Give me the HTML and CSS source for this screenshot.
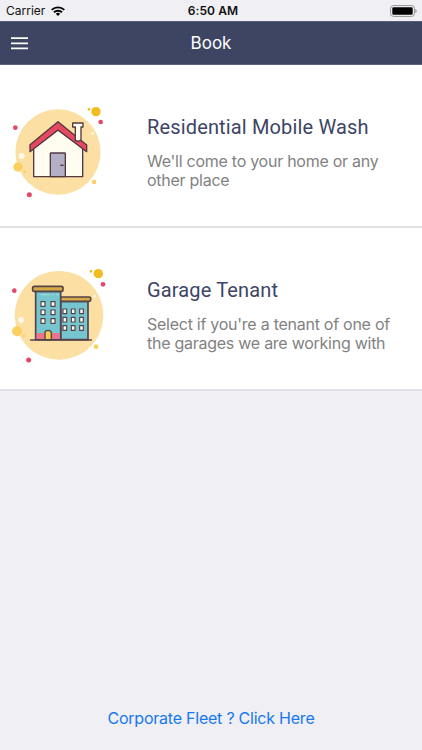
FILE: index.html
```html
<!DOCTYPE html>
<html lang="en">
<head>
<meta charset="utf-8">
<title>Book</title>
<link rel="stylesheet" href="styles.css">
</head>
<body>
<div class="status">
  <div class="carrier"><span class="carrier-name">Carrier</span>
    <svg class="wifi" viewBox="0 0 14 10" width="14" height="10"><g fill="none" stroke="#000" stroke-width="1.9"><path d="M.7 3.9a9.2 9.2 0 0 1 12.6 0"/><path d="M3 6.3a5.8 5.8 0 0 1 8 0"/></g><path d="M4.8 7.8a3.2 3.2 0 0 1 4.4 0L7 10z"/></svg>
  </div>
  <span class="time">6:50 AM</span>
  <svg class="battery" viewBox="0 0 27 12" width="27" height="12"><rect x=".6" y=".6" width="23.8" height="10.8" rx="2.8" fill="#f4f4f6" stroke="#929295"/><rect x="2.3" y="2.3" width="20.4" height="7.4" rx="1.3"/><path d="M25.3 4v4q1.4-.6 1.4-2t-1.4-2z" fill="#929295"/></svg>
</div>
<header class="nav">
  <svg class="menu" viewBox="0 0 17 13" width="17" height="13"><path d="M0 1.2h17M0 6.4h17M0 11.4h17" stroke="#fff" stroke-width="1.7"/></svg>
  <h1>Book</h1>
</header>
<main>
  <section class="row">
    <svg class="art art-house" viewBox="0 0 345 345">
      <circle cx="174" cy="171" r="128" fill="#fbdfa3"/>
      <g fill="#f1bc20"><circle cx="288" cy="50" r="14"/><circle cx="267" cy="43" r="4"/></g>
      <g fill="#fbcf60"><circle cx="54" cy="216" r="14"/><circle cx="74" cy="230" r="4"/><circle cx="282" cy="261" r="7"/></g>
      <g fill="#e54867"><circle cx="302" cy="81" r="7"/><circle cx="46" cy="98" r="7"/><circle cx="88" cy="299" r="7.5"/></g>
      <g fill="#fff8e8"><circle cx="65" cy="183" r="9"/><circle cx="278" cy="116" r="4"/></g>
      <g stroke="#543840" stroke-width="4" stroke-linejoin="round">
        <path d="M101 159L174 105l74 54v86H101z" fill="#fffdf0"/>
        <path d="M151 245v-69q0-2 2-2h41q2 0 2 2v69z" fill="#b3b0c6"/>
        <path d="M90 149l84-69 86 70v20l-86-65-84 65z" fill="#e54961"/>
        <path d="M226 136V96h-8V84h31v12h-6v39q-8 7-17 1z" fill="#fffdf0"/>
        <path d="M181 211h10" fill="none"/>
      </g>
    </svg>
    <div class="copy">
      <h2>Residential Mobile Wash</h2>
      <p>We'll come to your home or any<br>other place</p>
    </div>
  </section>
  <section class="row">
    <svg class="art art-garage" viewBox="0 0 345 345">
      <circle cx="177" cy="166" r="133" fill="#fbdfa3"/>
      <g fill="#f1bc20"><circle cx="295" cy="41" r="14"/><circle cx="273" cy="34" r="4"/></g>
      <g fill="#fbcf60"><circle cx="51" cy="214" r="15"/><circle cx="72" cy="228" r="4"/><circle cx="288" cy="260" r="7"/></g>
      <g fill="#e54867"><circle cx="309" cy="73" r="7"/><circle cx="43" cy="92" r="7"/><circle cx="86" cy="300" r="7.5"/></g>
      <g fill="#fff8e8"><circle cx="63" cy="180" r="9"/><circle cx="284" cy="109" r="4"/></g>
      <g stroke="#55424a" stroke-width="5" stroke-linejoin="round" stroke-linecap="round">
        <path d="M182 124h82v115h-82z" fill="#76c6d0"/>
        <rect x="177" y="111" width="95" height="13" rx="4" fill="#d5aa45"/>
        <path d="M107 94h75v145h-75z" fill="#76c6d0"/>
        <path d="M110 219h69v18h-69z" fill="#ee718d" stroke="none"/>
        <rect x="98" y="79" width="91" height="15" rx="5" fill="#d5aa45"/>
        <path d="M135 239v-20q0-8 9-8t10 8v20z" fill="#f3cd4e" stroke-width="4"/>
        <path d="M92 240h182"/>
      </g>
      <path d="M122 104h28M155 104h5M167 104h10" stroke="#a5dde0" stroke-width="3"/>
      <g fill="#fffdf0" stroke="#55424a" stroke-width="3.5">
        <path d="M123 125h12v14h-12zM153 125h12v14h-12zM123 150h12v14h-12zM153 150h12v14h-12zM123 176h12v14h-12zM153 176h12v14h-12z"/>
        <path d="M189 147h11v14h-11zM214 147h11v14h-11zM239 147h11v14h-11zM189 172h11v14h-11zM214 172h11v14h-11zM239 172h11v14h-11zM189 197h11v14h-11zM214 197h11v14h-11zM239 197h11v14h-11z"/>
      </g>
    </svg>
    <div class="copy">
      <h2>Garage Tenant</h2>
      <p>Select if you're a tenant of one of<br>the garages we are working with</p>
    </div>
  </section>
</main>
<footer><a>Corporate Fleet ? Click Here</a></footer>
</body>
</html>
```
FILE: styles.css
```css
* { box-sizing: border-box; }
body {
  margin: 0;
  height: 750px;
  display: flex;
  flex-direction: column;
  background: #efeff4;
  font-family: Inter, "Liberation Sans", sans-serif;
  overflow: hidden;
}
h1, h2, p { margin: 0; font-weight: 400; }
svg { display: block; flex: none; }
.status {
  height: 21px;
  display: grid;
  grid-template-columns: 1fr auto 1fr;
  align-items: center;
  padding: 0 5px 0 6px;
  font-size: 12px;
  line-height: 21px;
  color: #111;
}
.carrier { display: flex; align-items: center; gap: 6px; }
.time { font-weight: 600; letter-spacing: 0.1px; margin-left: 3px; }
.battery { justify-self: end; }
.nav {
  height: 44px;
  display: grid;
  grid-template-columns: 1fr auto 1fr;
  align-items: center;
  padding: 0 11px;
  background: #3d4563;
  border-top: 1px solid #56607c;
  border-bottom: 1px solid #5b627b;
  color: #fff;
}
.nav h1 { font-size: 17px; line-height: 24px; }
.row {
  height: 163px;
  display: flex;
  background: #fff;
  border-bottom: 2px solid #e1e1e5;
}
.art { width: 115px; height: 115px; }
.art-house { margin-top: 30px; }
.art-garage { margin-top: 32px; }
.copy { margin-left: 32px; padding-top: 50px; white-space: nowrap; }
.copy h2 {
  font-family: Roboto, sans-serif;
  font-size: 20px;
  line-height: 24px;
  letter-spacing: 0.15px;
  color: #3d4465;
}
.copy p {
  margin-top: 13px;
  font-size: 16px;
  line-height: 19px;
  letter-spacing: -0.26px;
  color: #828282;
}
footer {
  margin-top: auto;
  height: 64px;
  text-align: center;
  font-size: 16px;
  line-height: 64px;
  letter-spacing: -0.23px;
  color: #1879ed;
}
```
